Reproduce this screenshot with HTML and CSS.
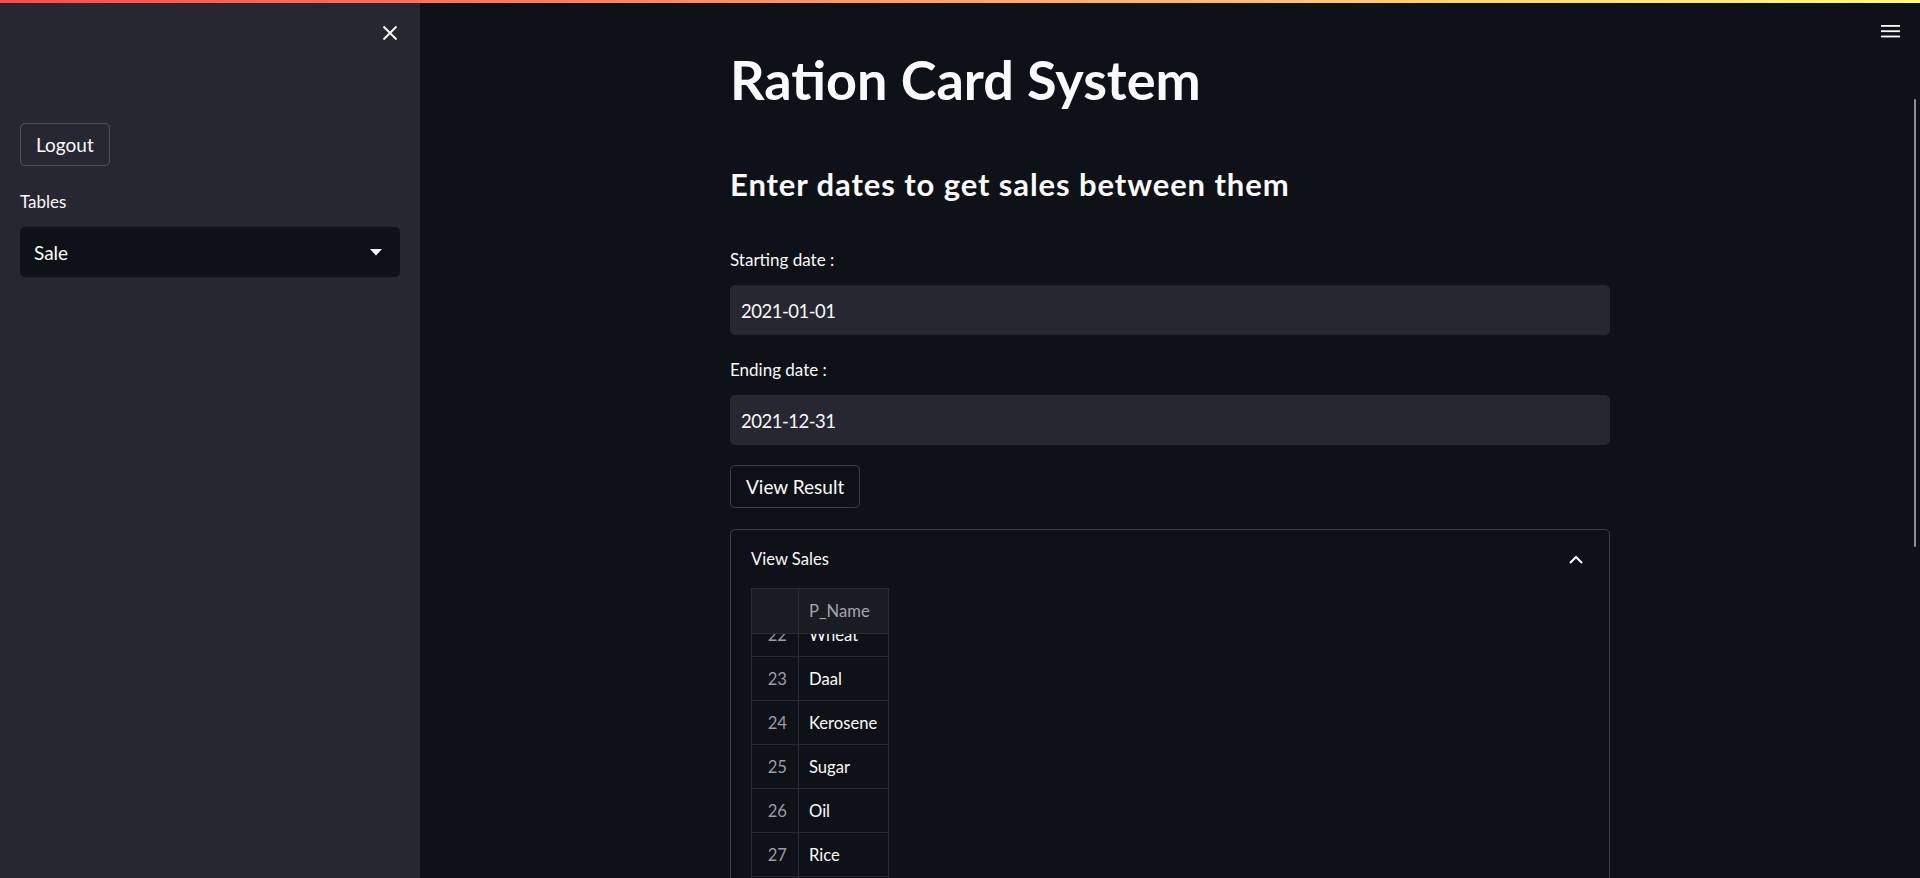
FILE: index.html
```html
<!DOCTYPE html>
<html lang="en">
<head>
<meta charset="utf-8">
<title>Ration Card System</title>
<link rel="stylesheet" href="styles.css">
</head>
<body>
<div class="decoration"></div>
<div class="app">
  <aside class="sidebar">
    <div class="sidebar-header">
      <button class="icon-btn" aria-label="Close sidebar">
        <svg width="16" height="16" viewBox="0 0 16 16"><path d="M1.5 1.5 L14.5 14.5 M14.5 1.5 L1.5 14.5" stroke="#fafafa" stroke-width="1.9" fill="none"/></svg>
      </button>
    </div>
    <div class="sidebar-content">
      <button class="btn">Logout</button>
      <div class="label sidebar-label">Tables</div>
      <div class="select">
        <span>Sale</span>
        <svg width="12" height="7" viewBox="0 0 12 7"><path d="M0 0 H12 L6 6.5 Z" fill="#fafafa"/></svg>
      </div>
    </div>
  </aside>
  <main class="main">
    <div class="topbar">
      <button class="icon-btn menu" aria-label="Menu">
        <svg width="19" height="13" viewBox="0 0 19 13"><rect x="0" y="0" width="19" height="1.8" fill="#fafafa"/><rect x="0" y="5.3" width="19" height="1.8" fill="#fafafa"/><rect x="0" y="10.6" width="19" height="1.8" fill="#fafafa"/></svg>
      </button>
    </div>
    <div class="block">
      <h1 class="title">Ration Card System</h1>
      <h3 class="subheader">Enter dates to get sales between them</h3>
      <div class="label field-label">Starting date :</div>
      <div class="input">2021-01-01</div>
      <div class="label field-label second">Ending date :</div>
      <div class="input">2021-12-31</div>
      <button class="btn result-btn">View Result</button>
      <div class="expander">
        <div class="exp-header">
          <span>View Sales</span>
          <svg width="14" height="9" viewBox="0 0 14 9"><path d="M1 8 L7 2 L13 8" stroke="#fafafa" stroke-width="2" fill="none"/></svg>
        </div>
        <div class="grid">
          <div class="grid-head">
            <div class="cell idx"></div>
            <div class="cell val">P_Name</div>
          </div>
          <div class="grid-body">
            <div class="grid-rows">
              <div class="row"><div class="cell idx">22</div><div class="cell val">Wheat</div></div>
              <div class="row"><div class="cell idx">23</div><div class="cell val">Daal</div></div>
              <div class="row"><div class="cell idx">24</div><div class="cell val">Kerosene</div></div>
              <div class="row"><div class="cell idx">25</div><div class="cell val">Sugar</div></div>
              <div class="row"><div class="cell idx">26</div><div class="cell val">Oil</div></div>
              <div class="row"><div class="cell idx">27</div><div class="cell val">Rice</div></div>
              <div class="row"><div class="cell idx">28</div><div class="cell val">Wheat</div></div>
              <div class="row"><div class="cell idx">29</div><div class="cell val">Daal</div></div>
            </div>
          </div>
        </div>
      </div>
    </div>
    <div class="scrollbar"></div>
  </main>
</div>
</body>
</html>
```
FILE: styles.css
```css
* { box-sizing: border-box; }
html, body {
  margin: 0;
  padding: 0;
  height: 878px;
  overflow: hidden;
  background: #0e1117;
  color: #fafafa;
  font-family: "Lato", "Open Sans", sans-serif;
}
.decoration {
  position: fixed;
  top: 0; left: 0; right: 0;
  height: 3px;
  background: linear-gradient(90deg, #ff4b4b, #fffd80);
  z-index: 10;
}
.app {
  display: flex;
  height: 878px;
}
.sidebar {
  width: 420px;
  flex: 0 0 420px;
  background: #262730;
  height: 100%;
}
.sidebar-header {
  display: flex;
  justify-content: flex-end;
  padding: 19px 16px 0 0;
}
.icon-btn {
  width: 28px;
  height: 28px;
  border: 0;
  padding: 0;
  background: transparent;
  display: flex;
  align-items: center;
  justify-content: center;
}
.sidebar-content {
  padding: 76px 20px 0 20px;
  display: flex;
  flex-direction: column;
  align-items: flex-start;
}
.btn {
  height: 43px;
  padding: 1px 15px 0 15px;
  border: 1px solid rgba(250, 250, 250, 0.2);
  border-radius: 5px;
  background: transparent;
  color: #fafafa;
  font-family: inherit;
  font-size: 19px;
  line-height: 40px;
}
.label {
  font-size: 17px;
  line-height: 22px;
  height: 22px;
  color: #fafafa;
}
.sidebar-label { margin-top: 25px; }
.select {
  margin-top: 14px;
  width: 380px;
  height: 50px;
  background: #0e1117;
  border-radius: 5px;
  display: flex;
  align-items: center;
  justify-content: space-between;
  padding: 0 18px 0 14px;
  font-size: 19px;
}
.main {
  flex: 1;
  position: relative;
  display: flex;
  flex-direction: column;
  align-items: center;
}
.topbar {
  position: absolute;
  top: 0; right: 0;
  padding: 17px 16px 0 0;
}
.menu { width: 27px; }
.block {
  width: 880px;
  padding-top: 49px;
  display: flex;
  flex-direction: column;
  align-items: flex-start;
}
.title {
  margin: 0;
  font-size: 54px;
  font-weight: 700;
  line-height: 62px;
  height: 62px;
}
.subheader {
  margin: 56px 0 0 0;
  font-size: 31px;
  font-weight: 700;
  letter-spacing: 0.9px;
  line-height: 34px;
  height: 34px;
}
.field-label { margin-top: 48px; }
.field-label.second { margin-top: 24px; }
.input {
  margin-top: 14px;
  width: 880px;
  height: 50px;
  background: #262730;
  border-radius: 5px;
  padding: 2px 0 0 11px;
  font-size: 18.5px;
  letter-spacing: -0.5px;
  line-height: 48px;
}
.result-btn {
  margin-top: 20px;
  background: #0e1117;
}
.expander {
  margin-top: 21px;
  width: 880px;
  height: 400px;
  border: 1px solid rgba(250, 250, 250, 0.2);
  border-radius: 5px;
}
.exp-header {
  display: flex;
  align-items: center;
  justify-content: space-between;
  padding: 17px 26px 17px 20px;
  font-size: 16.6px;
  line-height: 24px;
}
.grid {
  margin-left: 20px;
  width: 138px;
  border-left: 1px solid #2a2c35;
  border-top: 1px solid #2a2c35;
}
.grid-head {
  display: flex;
  height: 45px;
  background: #1a1c24;
  border-bottom: 1px solid #2a2c35;
  position: relative;
  z-index: 1;
}
.grid-body {
  height: 260px;
  overflow: hidden;
}
.grid-rows { margin-top: -21px; }
.row {
  display: flex;
  height: 44px;
  border-bottom: 1px solid #2a2c35;
}
.cell {
  display: flex;
  align-items: center;
  font-size: 16.6px;
  border-right: 1px solid #2a2c35;
  height: 100%;
}
.cell.idx {
  width: 47px;
  justify-content: flex-end;
  padding-right: 11px;
  color: #9a9da5;
}
.cell.val {
  width: 90px;
  padding-left: 10px;
  color: #fafafa;
}
.grid-head .cell.val { color: #a3a6ae; }
.scrollbar {
  position: absolute;
  right: 4px;
  top: 99px;
  width: 2px;
  height: 448px;
  background: #8e8e8e;
  border-radius: 1px;
}
```
